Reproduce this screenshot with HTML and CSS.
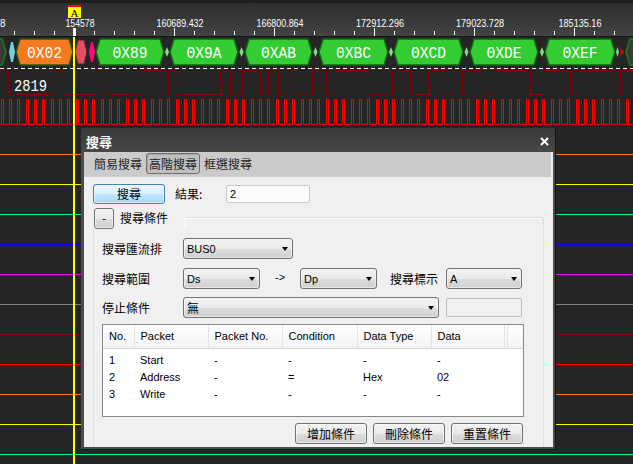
FILE: index.html
```html
<!DOCTYPE html>
<html lang="zh-Hant">
<head>
<meta charset="utf-8">
<title>搜尋</title>
<link rel="stylesheet" href="styles.css">
</head>
<body>
<svg class="scope" width="633" height="464" viewBox="0 0 633 464" xmlns="http://www.w3.org/2000/svg">
  <defs>
    <linearGradient id="rul" x1="0" y1="0" x2="0" y2="1">
      <stop offset="0" stop-color="#2b2b2b"/>
      <stop offset="1" stop-color="#434343"/>
    </linearGradient>
    <pattern id="clk" x="0" y="97" width="25" height="30" patternUnits="userSpaceOnUse">
      <path class="clk-path" d="M0 27.5H1.5V2.5H3.5V27.5H9.5V2.5H11.5V27.5H17.5V2.5H19.5V27.5H25"/>
    </pattern>
  </defs>
  <rect width="633" height="464" fill="#252525"/>
  <!-- ruler -->
  <rect width="633" height="36" fill="url(#rul)"/>
  <rect width="633" height="3" fill="#1e1e1e"/>
  <rect y="36" width="633" height="1" fill="#151515"/>
  <path class="tick" d="M14.5 31v4M34.5 31v4M54.5 31v4M94.5 31v4M114.5 31v4M134.5 31v4M154.5 31v4M194.5 31v4M214.5 31v4M234.5 31v4M254.5 31v4M294.5 31v4M314.5 31v4M334.5 31v4M354.5 31v4M394.5 31v4M414.5 31v4M434.5 31v4M454.5 31v4M494.5 31v4M514.5 31v4M534.5 31v4M554.5 31v4M594.5 31v4M614.5 31v4M174.5 28v8M274.5 28v8M374.5 28v8M474.5 28v8M574.5 28v8"/>
  <text class="rlab start" x="0" y="27">8</text>
  <text class="rlab" x="80" y="27" textLength="29" lengthAdjust="spacingAndGlyphs">154578</text>
  <text class="rlab" x="180" y="27" textLength="47" lengthAdjust="spacingAndGlyphs">160689.432</text>
  <text class="rlab" x="280" y="27" textLength="47" lengthAdjust="spacingAndGlyphs">166800.864</text>
  <text class="rlab" x="380" y="27" textLength="48" lengthAdjust="spacingAndGlyphs">172912.296</text>
  <text class="rlab" x="480" y="27" textLength="48" lengthAdjust="spacingAndGlyphs">179023.728</text>
  <text class="rlab" x="580" y="27" textLength="43" lengthAdjust="spacingAndGlyphs">185135.16</text>
  <rect x="73" y="28" width="3" height="8" fill="#fff"/>
  <rect x="68" y="5" width="13" height="2" fill="#ff0000"/>
  <rect x="68" y="7" width="13" height="11" fill="#ffff00"/>
  <text class="mk" x="74.5" y="16.5">A</text>

  <!-- bus row -->
  <polygon class="pk-grey" points="-10,52 -6,39 2,39 6,52 2,65 -6,65"/>
  <polygon class="pk-blue" points="9,52 11,42 13,42 15,52 13,62 11,62"/>
  <polygon class="pk-orange" points="16,52 20,39 69,39 73,52 69,65 20,65"/>
  <polygon class="pk-pink" points="75,52 78,40 84,40 87,52 84,64 78,64"/>
  <polygon class="pk-mag" points="89,52 91,42 93,42 95,52 93,62 91,62"/>
  <polygon class="pk-green" points="96,52 100,39 160,39 164,52 160,65 100,65"/>
  <polygon class="pk-green" points="170,52 174,39 234,39 238,52 234,65 174,65"/>
  <polygon class="pk-green" points="245,52 249,39 308,39 312,52 308,65 249,65"/>
  <polygon class="pk-green" points="319,52 323,39 384,39 388,52 384,65 323,65"/>
  <polygon class="pk-green" points="394,52 398,39 459,39 463,52 459,65 398,65"/>
  <polygon class="pk-green" points="470,52 474,39 534,39 538,52 534,65 474,65"/>
  <polygon class="pk-green" points="545,52 549,39 611,39 615,52 611,65 549,65"/>
  <polygon class="pk-dia" points="165,52 167,47 169,52 167,57"/>
  <polygon class="pk-dia" points="239.5,52 241.5,47 243.5,52 241.5,57"/>
  <polygon class="pk-dia" points="313.5,52 315.5,47 317.5,52 315.5,57"/>
  <polygon class="pk-dia" points="389,52 391,47 393,52 391,57"/>
  <polygon class="pk-dia" points="464.5,52 466.5,47 468.5,52 466.5,57"/>
  <polygon class="pk-dia" points="540,52 542,47 544,52 542,57"/>
  <polygon class="pk-dia" points="616,52 617.5,47 619,52 617.5,57"/>
  <polygon class="pk-red" points="620.5,48 624,52 620.5,56"/>
  <polygon class="pk-grey" points="626,52 630,39 650,39 654,52 650,65 630,65"/>
  <text class="pk" x="44.5" y="57.5" textLength="35" lengthAdjust="spacingAndGlyphs">0X02</text>
  <text class="pk" x="130" y="57.5" textLength="35" lengthAdjust="spacingAndGlyphs">0X89</text>
  <text class="pk" x="204" y="57.5" textLength="35" lengthAdjust="spacingAndGlyphs">0X9A</text>
  <text class="pk" x="278.5" y="57.5" textLength="35" lengthAdjust="spacingAndGlyphs">0XAB</text>
  <text class="pk" x="353.5" y="57.5" textLength="35" lengthAdjust="spacingAndGlyphs">0XBC</text>
  <text class="pk" x="428.5" y="57.5" textLength="35" lengthAdjust="spacingAndGlyphs">0XCD</text>
  <text class="pk" x="504" y="57.5" textLength="35" lengthAdjust="spacingAndGlyphs">0XDE</text>
  <text class="pk" x="580" y="57.5" textLength="35" lengthAdjust="spacingAndGlyphs">0XEF</text>
  <line class="dash" x1="0" y1="68.5" x2="633" y2="68.5"/>

  <!-- waveforms -->
  <path class="wave-dark" d="M0 70.5H8.5V94.5H55.5V70.5H63.5V94.5H95.5V70.5H103.5V94.5H137.5V70.5H163.5V94.5H168.5V70.5H177.5V94.5H220.5V70.5H230.5V94.5H242.5V70.5H260.5V94.5H268.5V70.5H278.5V94.5H287.5V70.5H295.5V94.5H312.5V70.5H326.5V94.5H335.5V70.5H371.5V94.5H392.5V70.5H410.5V94.5H428.5V70.5H445.5V94.5H453.5V70.5H462.5V94.5H467.5V70.5H485.5V94.5H493.5V70.5H530.5V94.5H543.5V70.5H570.5V94.5H579.5V70.5H615.5V94.5H620.5V70.5H633"/>
  <text class="cnt" x="14" y="91" textLength="33" lengthAdjust="spacingAndGlyphs">2819</text>
  <rect x="0" y="97" width="633" height="30" fill="url(#clk)"/>

  <rect y="154" width="633" height="1" fill="#ff7f27"/>
  <rect y="184" width="633" height="1" fill="#ffff00"/>
  <rect y="214" width="633" height="1" fill="#00ff7f"/>
  <rect y="244" width="633" height="1" fill="#0000ff"/>
  <rect y="274" width="633" height="1" fill="#ff00ff"/>
  <rect y="304" width="633" height="1" fill="#808080"/>
  <rect y="334" width="633" height="1" fill="#800000"/>
  <rect y="364" width="633" height="1" fill="#ff0000"/>
  <rect y="394" width="633" height="1" fill="#ff7f27"/>
  <rect y="424" width="633" height="1" fill="#ffff00"/>
  <rect y="454" width="633" height="1" fill="#00ff7f"/>

  <rect x="73" y="37" width="2" height="427" fill="#ffff00"/>
</svg>

<div class="dialog">
  <div class="titlebar">
    <span class="title">搜尋</span>
    <svg class="close" width="9" height="9" viewBox="0 0 9 9"><path d="M1 1L8 8M8 1L1 8"/></svg>
  </div>
  <div class="frame">
    <div class="tabs">
      <span class="tab">簡易搜尋</span>
      <span class="tab active">高階搜尋</span>
      <span class="tab">框選搜尋</span>
    </div>
    <div class="body">
      <div class="row-search">
        <button class="btn-blue">搜尋</button>
        <span class="lbl-result">結果:</span>
        <div class="textbox">2</div>
      </div>
      <div class="group-head">
        <button class="btn btn-toggle">-</button>
        <span class="group-title">搜尋條件</span>
        <div class="group-line"></div>
      </div>
      <div class="group">
        <div class="frow r1">
          <span class="lbl">搜尋匯流排</span>
          <div class="dd w110">BUS0</div>
        </div>
        <div class="frow r2">
          <span class="lbl">搜尋範圍</span>
          <div class="dd w77">Ds</div>
          <span class="arrow-txt">-&gt;</span>
          <div class="dd w77 dp">Dp</div>
          <span class="lbl-mark">搜尋標示</span>
          <div class="dd w76 mark">A</div>
        </div>
        <div class="frow r3">
          <span class="lbl">停止條件</span>
          <div class="dd w256 cjk">無</div>
          <div class="textbox disabled"></div>
        </div>
        <div class="tbl">
          <table>
            <colgroup>
              <col class="c1"><col class="c2"><col class="c3"><col class="c4"><col class="c5"><col class="c6"><col class="c7"><col>
            </colgroup>
            <thead>
              <tr><th>No.</th><th>Packet</th><th>Packet No.</th><th>Condition</th><th>Data Type</th><th>Data</th><th></th><th class="last"></th></tr>
            </thead>
            <tbody>
              <tr class="first"><td>1</td><td>Start</td><td>-</td><td>-</td><td>-</td><td>-</td><td></td><td></td></tr>
              <tr><td>2</td><td>Address</td><td>-</td><td>=</td><td>Hex</td><td>02</td><td></td><td></td></tr>
              <tr><td>3</td><td>Write</td><td>-</td><td>-</td><td>-</td><td>-</td><td></td><td></td></tr>
            </tbody>
          </table>
        </div>
        <div class="btns">
          <button class="btn btn-act">增加條件</button>
          <button class="btn btn-act">刪除條件</button>
          <button class="btn btn-act">重置條件</button>
        </div>
      </div>
    </div>
  </div>
</div>
</body>
</html>
```

FILE: styles.css
```css
* { box-sizing: border-box; }
html, body { margin: 0; padding: 0; }
body {
  width: 633px;
  height: 464px;
  overflow: hidden;
  position: relative;
  background: #252525;
  font-family: "Noto Sans CJK TC", "Liberation Sans", sans-serif;
  color: #000;
}
.scope { display: block; }

.tick { stroke: #fff; stroke-width: 1; fill: none; }
.rlab { font-family: "Liberation Sans", sans-serif; font-size: 10px; fill: #fff; text-anchor: middle; }
.rlab.start { text-anchor: start; }
.mk { font-family: "Liberation Serif", serif; font-size: 11px; fill: #000; text-anchor: middle; }
.pk { font-family: "Liberation Mono", monospace; font-size: 16px; fill: #fff; text-anchor: middle; }
.cnt { font-family: "Liberation Mono", monospace; font-size: 16px; fill: #fff; }

.pk-green { fill: #33cc33; stroke: #126412; stroke-width: 1.5; }
.pk-orange { fill: #f47a20; stroke: #1f5c14; stroke-width: 1.5; }
.pk-pink { fill: #e34f62; stroke: #5c1f28; stroke-width: 1; }
.pk-mag { fill: #ff0a7e; }
.pk-blue { fill: #74cde0; }
.pk-grey { fill: #3a3a3a; stroke: #1f7a1f; stroke-width: 1.5; }
.pk-dia { fill: #8fd48f; }
.pk-red { fill: #e00000; }
.dash { stroke: #fff; stroke-width: 1; stroke-dasharray: 4 3; }
.wave-dark { fill: none; stroke: #800000; stroke-width: 1; }
.clk-path { fill: none; stroke: #ff0000; stroke-width: 1; }

/* dialog */
.dialog {
  position: absolute;
  left: 81px;
  top: 128px;
  width: 474px;
  height: 321px;
  background: #4b4b4b;
  box-shadow: 1px 1px 0 #141414;
  display: flex;
  flex-direction: column;
}
.titlebar {
  height: 24px;
  flex: none;
  display: flex;
  align-items: center;
  justify-content: space-between;
  padding: 4px 6px 0 5px;
  background: linear-gradient(#393939, #474747);
}
.title {
  color: #fff;
  font-size: 13px;
  font-weight: bold;
  line-height: 16px;
}
.close { display: block; margin-top: -1px; }
.close path { stroke: #fff; stroke-width: 2; fill: none; }

.frame {
  flex: 1;
  margin: 0 2px 2px 3px;
  background: #f0f0f0;
  display: flex;
  flex-direction: column;
  overflow: hidden;
}
.tabs {
  height: 25px;
  flex: none;
  background: #cbcbcb;
  margin-right: 2px;
  display: flex;
  align-items: flex-start;
  gap: 1px;
  padding: 1px 0 0 7px;
}
.tab {
  font-size: 12px;
  line-height: 17px;
  padding: 1px 2px;
  border: 1px solid transparent;
  border-radius: 3px;
  color: #222;
}
.tab.active {
  border-color: #6f6f6f;
  background: #c0c0c0;
  box-shadow: inset 1px 1px 0 #a8a8a8;
}

.body {
  flex: 1;
  overflow: hidden;
  padding-top: 7px;
}
.row-search {
  display: flex;
  align-items: center;
  height: 20px;
  padding-left: 9px;
}
.btn-blue {
  width: 72px;
  height: 20px;
  padding: 0;
  border: 1px solid #3c7fb1;
  border-radius: 3px;
  background: linear-gradient(#eaf6fd 0%, #d9f0fc 50%, #bee6fd 51%, #a7d9f5 100%);
  box-shadow: inset 0 0 0 1px rgba(255, 255, 255, 0.6);
  font: 12px "Noto Sans CJK TC", sans-serif;
  color: #000;
  line-height: 16px;
}
.lbl-result {
  margin-left: 10px;
  width: 51px;
  font-size: 12px;
  line-height: 16px;
}
.textbox {
  width: 84px;
  height: 18px;
  border: 1px solid #c9c9c9;
  border-radius: 2px;
  background: #fbfbfb;
  font: 11px "Liberation Sans", sans-serif;
  line-height: 16px;
  padding-left: 3px;
}
.textbox.disabled {
  width: 76px;
  height: 19px;
  margin-left: 7px;
  background: #f0f0f0;
  border-color: #bdbdbd;
}

.btn {
  padding: 0;
  border: 1px solid #707070;
  border-radius: 3px;
  background: linear-gradient(#f2f2f2 0%, #ebebeb 50%, #dddddd 51%, #cfcfcf 100%);
  box-shadow: inset 0 0 0 1px rgba(255, 255, 255, 0.55);
  color: #000;
}
.group-head {
  display: flex;
  align-items: flex-start;
  height: 21px;
  margin: 4px 9px 0 10px;
}
.btn-toggle {
  width: 20px;
  height: 21px;
  font: 11px "Liberation Sans", sans-serif;
  line-height: 17px;
}
.group-title {
  margin-left: 6px;
  font-size: 12px;
  line-height: 20px;
}
.group-line {
  flex: 1;
  margin: 9px 0 0 17px;
  height: 12px;
  border-top: 1px solid #d5dfe5;
  border-right: 1px solid #d5dfe5;
  border-top-right-radius: 3px;
  box-shadow: inset 1px 1px 0 #fff;
}
.group {
  margin: 0 9px;
  height: 230px;
  border: 1px solid #d5dfe5;
  border-top: none;
  padding: 9px 19px 0 8px;
}
.frow {
  display: flex;
  align-items: center;
  height: 21px;
}
.frow.r1 { margin-bottom: 9px; }
.frow.r2 { margin-bottom: 8px; }
.frow.r3 { margin-bottom: 6px; }
.lbl {
  width: 81px;
  font-size: 12px;
  line-height: 16px;
}
.dd {
  position: relative;
  height: 21px;
  border: 1px solid #707070;
  border-radius: 3px;
  background: linear-gradient(#f2f2f2 0%, #ebebeb 50%, #dddddd 51%, #cfcfcf 100%);
  box-shadow: inset 0 0 0 1px rgba(255, 255, 255, 0.5);
  font: 11px "Liberation Sans", sans-serif;
  line-height: 20px;
  padding-left: 3px;
}
.dd.cjk { font: 12px "Noto Sans CJK TC", sans-serif; line-height: 19px; }
.dd::after {
  content: "";
  position: absolute;
  right: 4px;
  top: 8px;
  border-top: 4px solid #000;
  border-left: 3.5px solid transparent;
  border-right: 3.5px solid transparent;
}
.w110 { width: 110px; }
.w77 { width: 77px; }
.w76 { width: 76px; }
.w256 { width: 256px; }
.arrow-txt {
  margin-left: 15px;
  width: 13px;
  font: 11px "Liberation Sans", sans-serif;
  margin-top: -4px;
}
.dd.dp { margin-left: 12px; }
.lbl-mark {
  margin-left: 13px;
  font-size: 12px;
  line-height: 16px;
}
.dd.mark { margin-left: 8px; }

.tbl {
  width: 422px;
  height: 93px;
  border: 1px solid #828790;
  background: #fff;
  overflow: hidden;
}
.tbl table {
  width: 420px;
  border-collapse: collapse;
  table-layout: fixed;
  font: 11px "Liberation Sans", sans-serif;
}
.c1 { width: 31px; }
.c2 { width: 74px; }
.c3 { width: 74px; }
.c4 { width: 75px; }
.c5 { width: 74px; }
.c6 { width: 73px; }
.c7 { width: 3px; }
.tbl th {
  height: 23px;
  padding: 0 0 0 6px;
  text-align: left;
  font-weight: normal;
  background: linear-gradient(#ffffff, #f1f2f4);
  border-right: 1px solid #e2e3e5;
  border-bottom: 1px solid #d5d5d5;
  white-space: nowrap;
}
.tbl th.last { border-right: none; }
.tbl td {
  height: 17px;
  padding: 0 0 0 6px;
  white-space: nowrap;
}
.tbl tr.first td {
  height: 20px;
  padding-top: 3px;
}
.btns {
  display: flex;
  justify-content: flex-end;
  gap: 6px;
  margin-top: 6px;
  padding-right: 1px;
}
.btn-act {
  width: 72px;
  height: 21px;
  font: 12px "Noto Sans CJK TC", sans-serif;
  line-height: 17px;
}
```
